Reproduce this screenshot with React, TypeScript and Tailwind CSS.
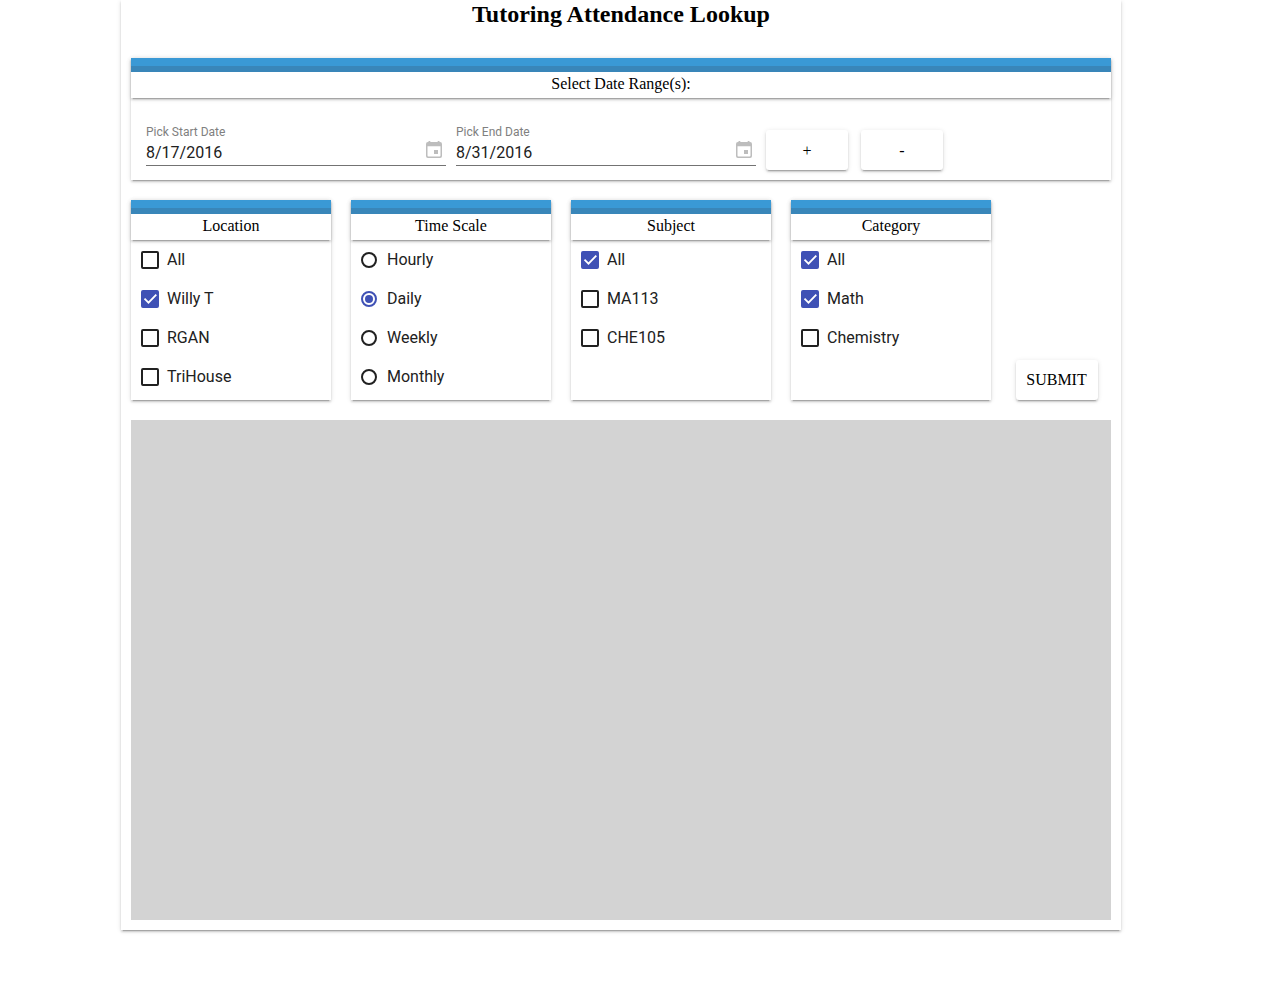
import { useState, type ReactNode } from "react";

const RAISED = "shadow-[0_3px_1px_-2px_rgba(0,0,0,0.2),0_2px_2px_0_rgba(0,0,0,0.14),0_1px_5px_0_rgba(0,0,0,0.12)]";

function Header({ children }: { children: ReactNode }) {
  return (
    <div className={`h-10 ${RAISED}`}>
      <div className="h-2 bg-[#3a99d5]" />
      <div className="h-1.5 bg-[#3986b9]" />
      <h2 className="h-[26px] text-center text-base leading-[23px]">{children}</h2>
    </div>
  );
}

function DateField({ label, value }: { label: string; value: string }) {
  return (
    <div className="flex h-[42px] w-[300px] items-end justify-between border-b border-[#737373] pr-1 font-['Roboto',sans-serif]">
      <div>
        <div className="text-xs leading-[18px] text-[#808080]">{label}</div>
        <div className="h-6 text-base leading-6 text-[#212121]">{value}</div>
      </div>
      <svg viewBox="0 0 16 18" className="mb-[7px] h-[18px] w-4" fill="#bdbdbd">
        <path
          fillRule="evenodd"
          d="M2.5 1h1.8v1h7.4V1h1.8v1h.6Q16 2 16 3.9v12.2Q16 18 14.1 18H1.9Q0 18 0 16.1V3.9Q0 2 1.9 2h.6zM1.5 6.3v9.3q0 .9.9.9h11.2q.9 0 .9-.9V6.3z"
        />
        <rect x="8" y="10" width="4" height="4" />
      </svg>
    </div>
  );
}

function Button({ children }: { children: ReactNode }) {
  return (
    <button className={`h-10 w-[82px] rounded-[3px] bg-white text-base ${RAISED}`}>
      {children}
    </button>
  );
}

function Mark({ kind, on }: { kind: "check" | "radio"; on: boolean }) {
  if (kind === "radio") {
    return (
      <span className={`mr-[10px] flex size-4 items-center justify-center rounded-full border-2 ${on ? "border-[#3f51b5]" : "border-[#212121]"}`}>
        {on && <span className="size-2 rounded-full bg-[#3f51b5]" />}
      </span>
    );
  }
  return (
    <span className={`mr-2 flex size-[18px] items-center justify-center rounded-[2px] border-2 ${on ? "border-[#3f51b5] bg-[#3f51b5]" : "border-[#212121]"}`}>
      {on && (
        <svg viewBox="0 0 18 18" className="size-[18px] shrink-0" fill="none" stroke="white" strokeWidth="1.8">
          <path d="M3.5 8.7 7.5 12.7 15.3 4.6" />
        </svg>
      )}
    </span>
  );
}

function OptionCard({ title, kind = "check", options, initial }: { title: string; kind?: "check" | "radio"; options: string[]; initial: string[] }) {
  const [selected, setSelected] = useState(initial);
  const toggle = (o: string) =>
    setSelected((s) => (kind === "radio" ? [o] : s.includes(o) ? s.filter((x) => x !== o) : [...s, o]));
  return (
    <section className={`h-[200px] w-[200px] ${RAISED}`}>
      <Header>{title}</Header>
      <div className="pl-[10px] font-['Roboto',sans-serif] text-base text-[#212121]">
        {options.map((o) => (
          <button key={o} onClick={() => toggle(o)} className="flex h-[39px] w-full items-center">
            <Mark kind={kind} on={selected.includes(o)} />
            {o}
          </button>
        ))}
      </div>
    </section>
  );
}

export default function App() {
  return (
    <div className="h-[984px] bg-white pl-[121px] font-['Liberation_Serif',serif] text-black">
      <main className={`h-[930px] w-[1000px] px-[10px] ${RAISED}`}>
        <h1 className="h-[58px] text-center text-2xl font-bold leading-7">Tutoring Attendance Lookup</h1>
        <section className={`h-[122px] ${RAISED}`}>
          <Header>Select Date Range(s):</Header>
          <div className="flex items-start pl-[15px] pt-[26px]">
            <DateField label="Pick Start Date" value="8/17/2016" />
            <div className="w-[10px]" />
            <DateField label="Pick End Date" value="8/31/2016" />
            <div className="ml-[10px] mt-1.5 flex gap-[13px]">
              <Button><span className="block pt-0.5">+</span></Button>
              <Button><span className="block pt-0.5">-</span></Button>
            </div>
          </div>
        </section>
        <div className="mt-5 flex items-end gap-5">
          <OptionCard title="Location" options={["All", "Willy T", "RGAN", "TriHouse"]} initial={["Willy T"]} />
          <OptionCard title="Time Scale" kind="radio" options={["Hourly", "Daily", "Weekly", "Monthly"]} initial={["Daily"]} />
          <OptionCard title="Subject" options={["All", "MA113", "CHE105"]} initial={["All"]} />
          <OptionCard title="Category" options={["All", "Math", "Chemistry"]} initial={["All", "Math"]} />
          <div className="ml-[5px]">
            <Button><span className="block pr-px">SUBMIT</span></Button>
          </div>
        </div>
        <div className="mt-5 h-[500px] bg-[#d3d3d3]" />
      </main>
    </div>
  );
}
